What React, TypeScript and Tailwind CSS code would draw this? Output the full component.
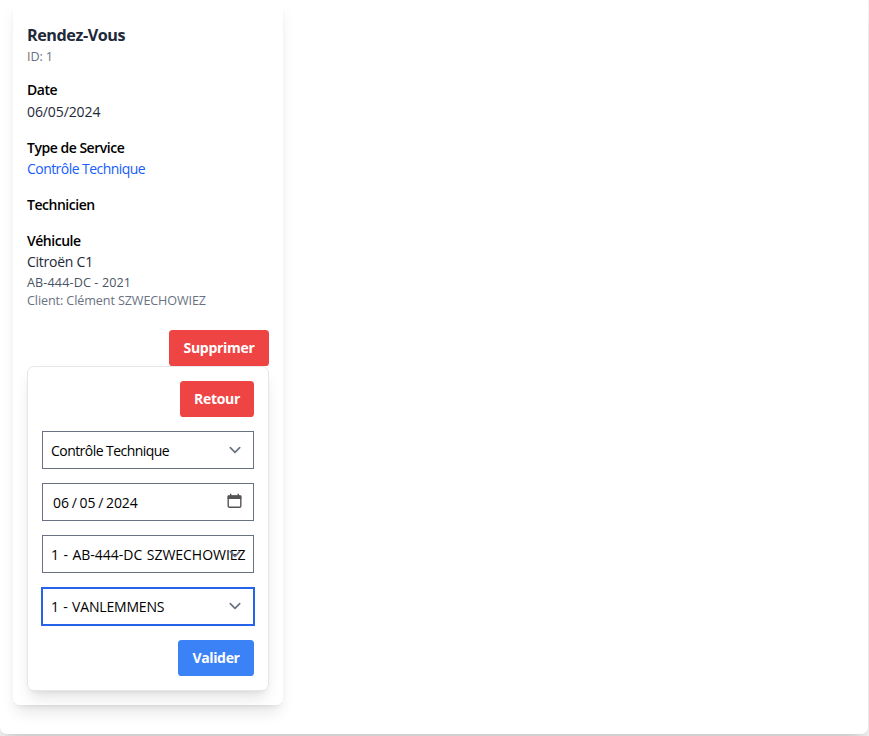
import type { ReactNode } from 'react';

const control =
  'block w-full appearance-none rounded-none bg-white pr-1 text-[14px] leading-[21.6px] text-black outline-none';
const idle = 'h-[38px] border border-gray-500 pl-2 pt-[2px]';

function Chevron({ place = 'right-[8px]' }: { place?: string }) {
  return (
    <svg className={`pointer-events-none absolute top-[8px] size-[22px] text-gray-500 ${place}`} viewBox="0 0 22 22" fill="none" stroke="currentColor" strokeWidth="1.7" strokeLinecap="round" strokeLinejoin="round">
      <path d="M6.3 8.7l4.7 4.6 4.7-4.6" />
    </svg>
  );
}

function CalendarIcon() {
  return (
    <svg className="pointer-events-none absolute right-[12px] top-[10px] h-[16px] w-[15px]" viewBox="0 0 15 16" fill="none">
      <rect x="1.2" y="3" width="12.6" height="11.2" rx="1.2" stroke="#555" strokeWidth="1.4" />
      <path d="M.6 2.4h13.8v3.6H.6zM3 .8h1.4v2H3zM10.6.8H12v2h-1.4z" fill="#555" />
    </svg>
  );
}

function Select({ label, tone = idle, tracking, chevron }: { label: string; tone?: string; tracking: string; chevron?: string }) {
  return (
    <div className="relative">
      <select className={`${control} ${tracking} ${tone}`}>
        <option>{label}</option>
      </select>
      <Chevron place={chevron} />
    </div>
  );
}

function Title({ children }: { children: ReactNode }) {
  return <h3 className="text-[14px] font-semibold leading-[21.6px] tracking-[-0.48px] text-black">{children}</h3>;
}

export default function App() {
  return (
    <div className="h-[736px] w-[869px] overflow-hidden bg-[#f3f3f3] font-['Open_Sans','Noto_Sans',sans-serif] text-[14px] leading-[21.6px]">
      <main className="h-[734px] w-[868px] overflow-hidden rounded-b-[7px] bg-white pl-[13px] shadow-xl">
        <section className="h-[705px] w-[270px] rounded-[7px] bg-white px-[14px] pt-[23.4px] shadow-lg">
          <h2 className="text-[16.2px] font-bold leading-[25.2px] tracking-[-0.45px] text-gray-800">Rendez-Vous</h2>
          <p className="-mt-px mb-[13.6px] text-[12.6px] leading-[18px] tracking-[-0.1px] text-gray-500">ID: 1</p>
          <div className="mb-[14.4px]">
            <Title>Date</Title>
            <p className="tracking-[-0.1px] text-gray-800">06/05/2024</p>
          </div>
          <div className="mb-[14.4px]">
            <Title>Type de Service</Title>
            <p className="tracking-[-0.55px] text-blue-600">Contrôle Technique</p>
          </div>
          <div className="mb-[14.4px]">
            <Title>Technicien</Title>
          </div>
          <div className="h-[99.6px]">
            <Title>Véhicule</Title>
            <p className="-mt-px leading-[21px] tracking-[-0.25px] text-gray-800">Citroën C1</p>
            <p className="mt-[2px] text-[12.6px] leading-[18px] tracking-[0.12px] text-gray-600">AB-444-DC - 2021</p>
            <p className="text-[12.6px] leading-[18px] tracking-[-0.1px] text-gray-500">Client: Clément SZWECHOWIEZ</p>
          </div>
          <div className="flex justify-end">
            <button className="h-9 w-[100px] rounded-[3.6px] bg-[#ef4444] font-bold tracking-[-0.3px] text-white">Supprimer</button>
          </div>
          <form className="flex h-[325px] flex-col gap-[14px] rounded-[7px] border border-gray-200 bg-white p-[14px] shadow-lg">
            <button type="button" className="h-9 w-[74px] shrink-0 self-end rounded-[3.6px] bg-[#ef4444] font-bold tracking-[-0.3px] text-white">Retour</button>
            <Select label="Contrôle Technique" tracking="tracking-[-0.55px]" />
            <div className="relative">
              <input type="text" readOnly defaultValue="06 / 05 / 2024" className={`${control} ${idle} pl-[10px] tracking-[-0.1px] [word-spacing:-0.7px]`} />
              <CalendarIcon />
            </div>
            <Select label="1 - AB-444-DC SZWECHOWIEZ" tracking="tracking-[-0.02px] [word-spacing:0.9px]" />
            <div className="-mx-px">
              <Select label="1 - VANLEMMENS" tracking="tracking-[-0.18px] [word-spacing:1px]" tone="h-[39px] border-2 border-[#2563eb] pl-2 pt-px" chevron="right-[9px]" />
            </div>
            <button type="button" className="h-9 w-[76px] shrink-0 self-end rounded-[3.6px] bg-[#3b82f6] font-bold tracking-[-0.35px] text-white">Valider</button>
          </form>
        </section>
      </main>
    </div>
  );
}
